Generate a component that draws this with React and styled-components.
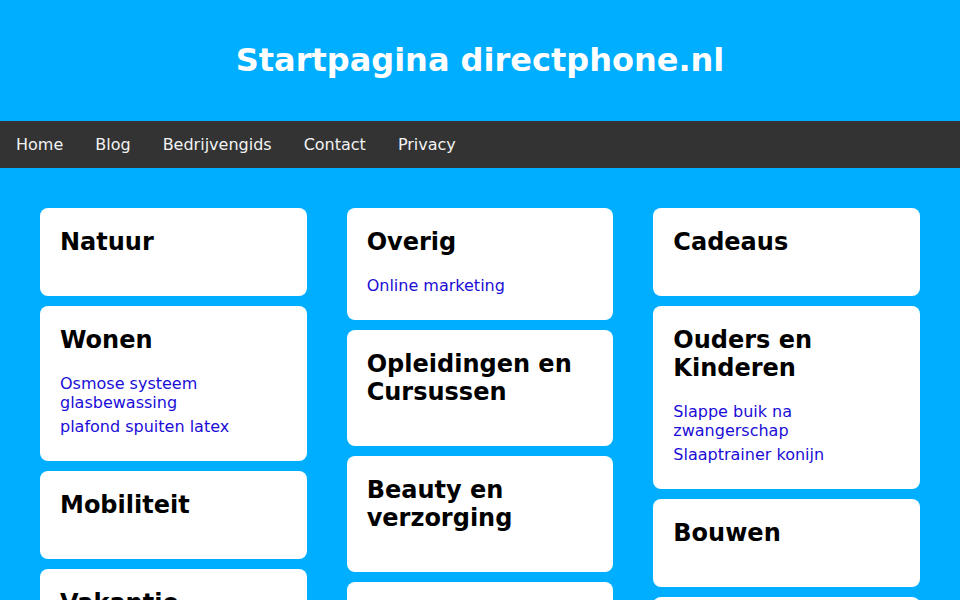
import styled, { createGlobalStyle } from "styled-components";

const GlobalStyle = createGlobalStyle`
  body {
    margin: 0;
    background: #00aeff;
    font-family: "DejaVu Sans", Verdana, sans-serif;
  }
`;

const Header = styled.header`
  background: #00aeff;
  height: 121px;
  display: flex;
  align-items: center;
  justify-content: center;
  h1 {
    margin: 0 0 1px;
    color: #fff;
    font-size: 32px;
    font-weight: bold;
  }
`;

const Nav = styled.nav`
  background: #333333;
  display: flex;
  a {
    color: #f2f2f2;
    text-decoration: none;
    font-size: 16px;
    padding: 14px 16px;
    line-height: 19px;
  }
`;

const Main = styled.main`
  padding: 40px;
  display: grid;
  grid-template-columns: repeat(3, 1fr);
  column-gap: 40px;
  align-items: start;
`;

const Column = styled.div`
  display: flex;
  flex-direction: column;
  gap: 10px;
`;

const Card = styled.section`
  background: #fff;
  border-radius: 8px;
  padding: 20px;
  h2 {
    margin: 0 0 20px;
    font-size: 24px;
    line-height: 28px;
    color: #000;
  }
  ul {
    list-style: none;
    margin: 0;
    padding: 0;
  }
  li {
    font-size: 16px;
    line-height: 19px;
    margin-bottom: 5px;
  }
  a {
    color: #1a0dd6;
    text-decoration: none;
  }
`;

const columns = [
  [
    { title: "Natuur", links: [] },
    { title: "Wonen", links: ["Osmose systeem glasbewassing", "plafond spuiten latex"] },
    { title: "Mobiliteit", links: [] },
    { title: "Vakantie", links: [] },
  ],
  [
    { title: "Overig", links: ["Online marketing"] },
    { title: "Opleidingen en Cursussen", links: [] },
    { title: "Beauty en verzorging", links: [] },
    { title: "Gezondheid", links: [] },
  ],
  [
    { title: "Cadeaus", links: [] },
    { title: "Ouders en Kinderen", links: ["Slappe buik na zwangerschap", "Slaaptrainer konijn"] },
    { title: "Bouwen", links: [] },
    { title: "Zakelijk", links: [] },
  ],
];

export default function App() {
  return (
    <>
      <GlobalStyle />
      <Header>
        <h1>Startpagina directphone.nl</h1>
      </Header>
      <Nav>
        <a href="#">Home</a>
        <a href="#">Blog</a>
        <a href="#">Bedrijvengids</a>
        <a href="#">Contact</a>
        <a href="#">Privacy</a>
      </Nav>
      <Main>
        {columns.map((col, i) => (
          <Column key={i}>
            {col.map((card) => (
              <Card key={card.title}>
                <h2>{card.title}</h2>
                <ul>
                  {card.links.map((l) => (
                    <li key={l}>
                      <a href="#">{l}</a>
                    </li>
                  ))}
                </ul>
              </Card>
            ))}
          </Column>
        ))}
      </Main>
    </>
  );
}
